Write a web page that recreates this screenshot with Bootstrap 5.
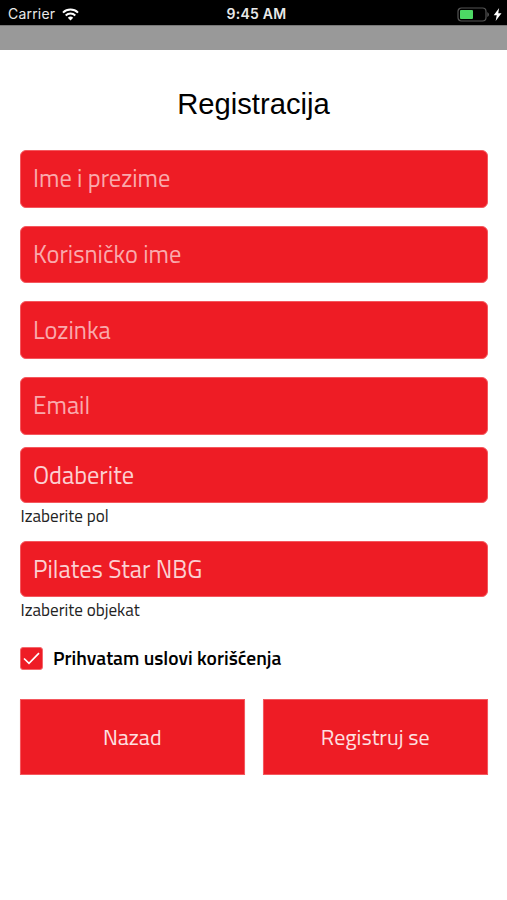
<!DOCTYPE html>
<html lang="sr-Latn">
<head>
<meta charset="utf-8">
<meta name="viewport" content="width=device-width, initial-scale=1">
<title>Registracija</title>
<link rel="stylesheet" href="https://cdn.jsdelivr.net/npm/bootstrap@5.3.0/dist/css/bootstrap.min.css">
<style>
  :root { --brand: #ee1c25; }
  body { font-family: "Titillium Web", Roboto, "Liberation Sans", sans-serif; color: #000; }
  .status-bar { height: 25px; font: 400 14px/24px Inter, sans-serif; color: #e9e9e9; display: grid; grid-template-columns: 1fr auto 1fr; padding: 1px 5px 0 8px; }
  .status-bar .carrier { letter-spacing: .2px; gap: 7px; }
  .status-bar .clock { font-weight: 600; font-size: 14px; line-height: 26px; letter-spacing: .25px; padding-left: 3px; }
  .top-strip { height: 25px; background: #999; border-top: 1px solid #777; }
  .page-title { font: 400 29.2px/36px "Liberation Sans", sans-serif; margin: 36px 0 28px; }
  .form-area { padding: 0 19.5px 0 20px; }
  .form-area .form-control { height: 57.5px; background: var(--brand); border: 1px solid #f4585e; border-radius: 6px; padding: 0 12px 2px; font-size: 24.4px; font-weight: 400; color: #fcd0d2; box-shadow: none; margin-bottom: 18.2px; }
  .form-area .form-control::placeholder { color: #faa9ac; opacity: 1; }
  .form-area .before-picks { margin-bottom: 12px; }
  .form-area .pick { height: 56.5px; margin-bottom: 0; padding-bottom: 0; }
  .form-area .hint { font-size: 17.1px; line-height: 26px; height: 37.5px; color: #222; padding-left: .5px; }
  .agree-row { gap: 10px; margin-top: 10.5px; }
  .agree-box { width: 23px; height: 23px; background: var(--brand); border: 1px solid #f4686d; border-radius: 3px; }
  .agree-text { font-size: 19.5px; font-weight: 600; line-height: 26px; }
  .form-actions { gap: 18.5px; margin-top: 28px; }
  .form-area .btn { height: 75.5px; background: var(--brand); border: 1px solid #f4585e; border-radius: 0; color: #fde0e1; font-size: 22px; padding-top: 7px; box-shadow: 0 1px 1px #e8d5d5; }
</style>
</head>
<body class="bg-white">
<header>
  <div class="status-bar bg-black">
    <div class="carrier d-flex align-items-center"><span>Carrier</span>
      <svg width="17" height="13" viewBox="0 0 17 13" fill="none" stroke="#fff" stroke-width="2"><path d="M1 4.600a10.800 10.800 0 0 1 15 0M3.700 7.500a6.900 6.900 0 0 1 9.600 0"/><path d="M8.500 12.500 5.800 9.800a3.800 3.800 0 0 1 5.400 0z" fill="#fff" stroke="none"/></svg>
    </div>
    <div class="clock">9:45 AM</div>
    <div class="d-flex align-items-center justify-content-end gap-1">
      <svg width="32" height="15" viewBox="0 0 32 15"><rect x="1" y="1" width="28" height="13" rx="3.500" fill="none" stroke="#555" stroke-width="1.200"/><rect x="3" y="3" width="13" height="9" rx="1" fill="#4cd964"/><path d="M30.300 5v5q1.700-1 1.700-2.500t-1.700-2.500" fill="#555"/></svg>
      <svg width="9" height="13" viewBox="0 0 8 12"><path d="M5.500 0 .5 6.800h2.800L2.300 12 7.700 4.800H4.700z" fill="#fff"/></svg>
    </div>
  </div>
  <div class="top-strip"></div>
</header>
<main>
  <h1 class="page-title text-center">Registracija</h1>
  <form class="form-area">
    <input class="form-control" type="text" placeholder="Ime i prezime" aria-label="Ime i prezime">
    <input class="form-control" type="text" placeholder="Korisničko ime" aria-label="Korisničko ime">
    <input class="form-control" type="password" placeholder="Lozinka" aria-label="Lozinka">
    <input class="form-control before-picks" type="email" placeholder="Email" aria-label="Email">
    <div class="form-control pick d-flex align-items-center">Odaberite</div>
    <div class="hint">Izaberite pol</div>
    <div class="form-control pick d-flex align-items-center">Pilates Star NBG</div>
    <div class="hint">Izaberite objekat</div>
    <div class="agree-row d-flex align-items-center">
      <div class="agree-box d-flex align-items-center justify-content-center" role="checkbox" aria-checked="true">
        <svg width="17" height="13" viewBox="0 0 17 13" fill="none" stroke="#fff" stroke-width="1.700"><path d="M1 6.500 6 11.300 16 1.200"/></svg>
      </div>
      <span class="agree-text">Prihvatam uslovi korišćenja</span>
    </div>
    <div class="form-actions d-flex">
      <button class="btn flex-fill w-50" type="button">Nazad</button>
      <button class="btn flex-fill w-50" type="button">Registruj se</button>
    </div>
  </form>
</main>
<script src="https://cdn.jsdelivr.net/npm/bootstrap@5.3.0/dist/js/bootstrap.bundle.min.js"></script>
</body>
</html>
